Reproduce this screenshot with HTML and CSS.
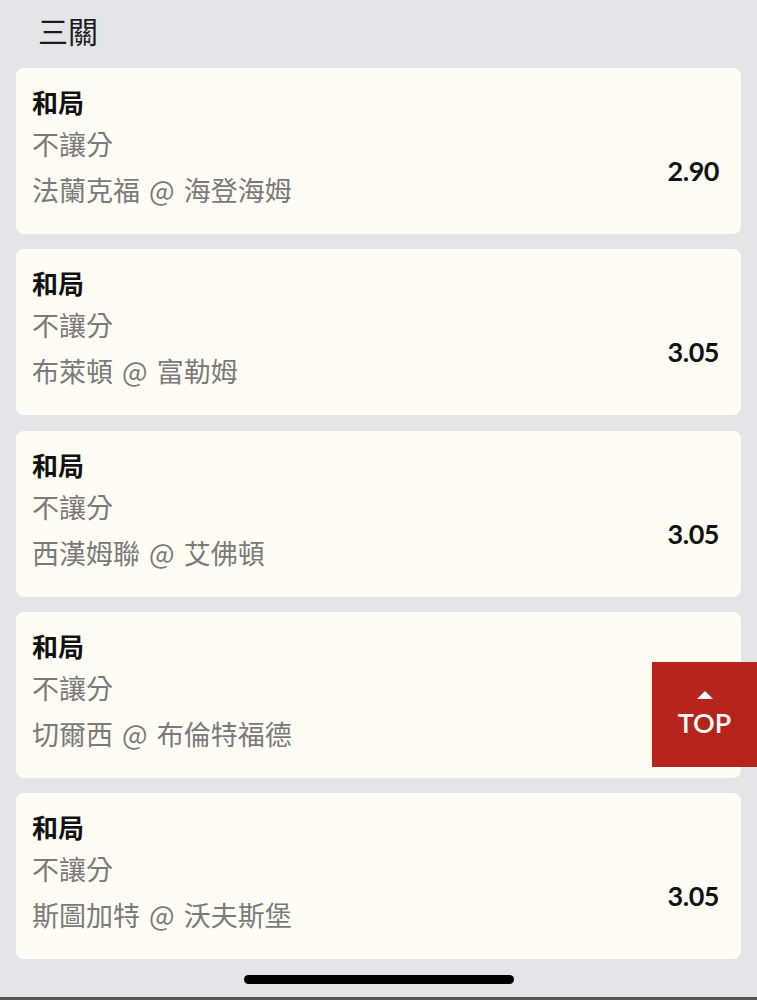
FILE: index.html
```html
<!DOCTYPE html>
<html lang="zh-Hant">
<head>
    <meta charset="UTF-8">
    <meta name="viewport" content="width=device-width, initial-scale=1.0">
    <title>三關</title>
    <link rel="stylesheet" href="styles.css">
</head>
<body>
    <h1 class="section-title">三關</h1>

    <!-- Bet selections -->
    <ul class="bet-list">
        <li class="bet-card">
            <div class="bet-info">
                <strong class="bet-result">和局</strong>
                <span class="bet-type">不讓分</span>
                <span class="bet-match">法蘭克福 @ 海登海姆</span>
            </div>
            <span class="bet-odds">2.90</span>
        </li>
        <li class="bet-card">
            <div class="bet-info">
                <strong class="bet-result">和局</strong>
                <span class="bet-type">不讓分</span>
                <span class="bet-match">布萊頓 @ 富勒姆</span>
            </div>
            <span class="bet-odds">3.05</span>
        </li>
        <li class="bet-card">
            <div class="bet-info">
                <strong class="bet-result">和局</strong>
                <span class="bet-type">不讓分</span>
                <span class="bet-match">西漢姆聯 @ 艾佛頓</span>
            </div>
            <span class="bet-odds">3.05</span>
        </li>
        <li class="bet-card">
            <div class="bet-info">
                <strong class="bet-result">和局</strong>
                <span class="bet-type">不讓分</span>
                <span class="bet-match">切爾西 @ 布倫特福德</span>
            </div>
            <span class="bet-odds">3.05</span>
        </li>
        <li class="bet-card">
            <div class="bet-info">
                <strong class="bet-result">和局</strong>
                <span class="bet-type">不讓分</span>
                <span class="bet-match">斯圖加特 @ 沃夫斯堡</span>
            </div>
            <span class="bet-odds">3.05</span>
        </li>
    </ul>

    <div class="home-bar"></div>

    <a class="top-button" href="#">
        <span class="top-arrow"></span>
        <span>TOP</span>
    </a>
</body>
</html>
```

FILE: styles.css
```css
body {
    font-family: "Noto Sans CJK TC", "Noto Sans", sans-serif;
    background-color: #e4e5e9;
    margin: 0;
    padding: 0 16px;
    height: 1000px;
    box-sizing: border-box;
    border-bottom: 3px solid #555;
    overflow: hidden;
}

.section-title {
    margin: 0;
    padding: 10px 0 0 22px;
    height: 68px;
    box-sizing: border-box;
    font-size: 30px;
    font-weight: normal;
    line-height: 40px;
    color: #1c1c1c;
}

.bet-list {
    list-style-type: none;
    padding: 0;
    margin: 0;
    display: flex;
    flex-direction: column;
    gap: 15.25px;
}

.bet-card {
    background-color: #fefcf3;
    border-radius: 8px;
    height: 166px;
    box-sizing: border-box;
    padding: 13px 22px 0 16px;
    display: flex;
    justify-content: space-between;
    align-items: flex-start;
}

.bet-info {
    display: flex;
    flex-direction: column;
}

.bet-result {
    font-size: 26px;
    line-height: 42px;
    color: #111;
}

.bet-type,
.bet-match {
    font-size: 27px;
    line-height: 42px;
    color: #7a7a7a;
}

.bet-match {
    line-height: 50px;
    word-spacing: 3px;
}

.bet-odds {
    font-family: Lato, "Liberation Sans", sans-serif;
    font-weight: bold;
    font-size: 27px;
    letter-spacing: -0.5px;
    line-height: 34px;
    margin-top: 73px;
    color: #111;
}

.home-bar {
    width: 270px;
    height: 9px;
    border-radius: 5px;
    background-color: #000;
    margin: 16px auto 0;
}

.top-button {
    position: absolute;
    left: 652px;
    top: 662px;
    width: 105px;
    height: 105px;
    background-color: #b5251c;
    color: #fff;
    text-decoration: none;
    font-family: Lato, "Liberation Sans", sans-serif;
    font-weight: 600;
    font-size: 27px;
    line-height: 30px;
    display: flex;
    flex-direction: column;
    align-items: center;
    justify-content: center;
    gap: 9px;
}

.top-arrow {
    width: 0;
    height: 0;
    border-left: 8px solid transparent;
    border-right: 8px solid transparent;
    border-bottom: 8px solid #fff;
}
```
